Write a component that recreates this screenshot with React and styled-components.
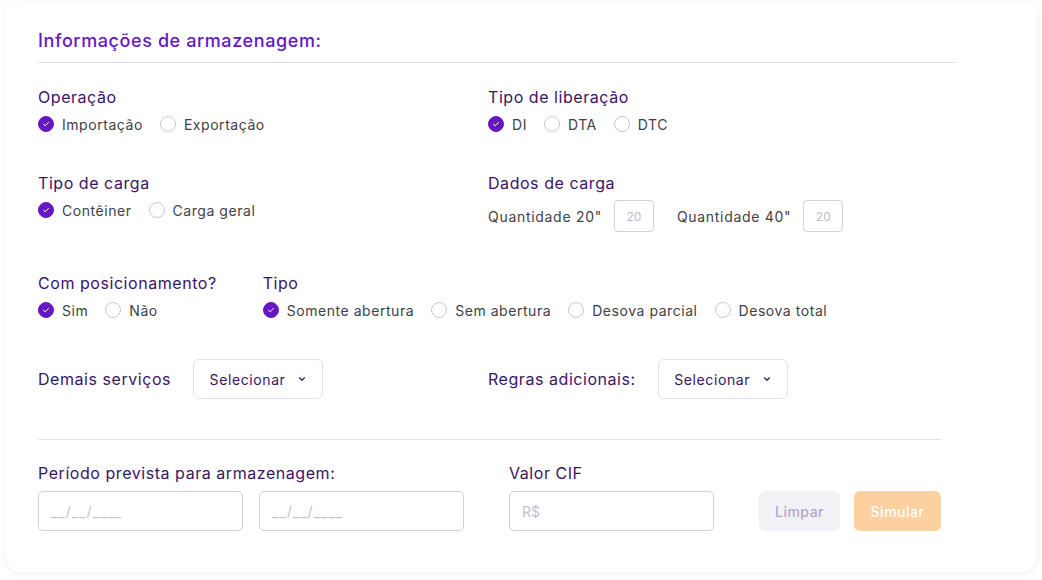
import React from 'react';
import styled, { createGlobalStyle } from 'styled-components';

const GlobalStyle = createGlobalStyle`
  body {
    margin: 0;
    background: #ffffff;
    font-family: 'Inter', 'Noto Sans', sans-serif;
  }
  * { box-sizing: border-box; }
`;

const Page = styled.div`
  padding: 1px 5px 8px 5px;
`;

const Card = styled.section`
  width: 1032px;
  height: 571px;
  background: #ffffff;
  border-radius: 16px;
  box-shadow: 0 1px 6px rgba(40, 30, 80, 0.08);
  padding: 27px 81px 0 33px;
`;

const Title = styled.h2`
  margin: 0;
  font-size: 18px;
  line-height: 26px;
  font-weight: 500;
  letter-spacing: 0.6px;
  color: #6517c4;
`;

const Divider = styled.hr`
  border: none;
  height: 1px;
  background: #e3dff0;
  margin: ${(p) => p.$mt}px 0 0 0;
  width: ${(p) => p.$w}px;
`;

const Grid = styled.div`
  display: grid;
  grid-template-columns: 450px 450px;
  margin-top: ${(p) => p.$mt}px;
`;

const Row = styled.div`
  display: flex;
  align-items: ${(p) => p.$align || 'flex-start'};
  gap: ${(p) => p.$gap || 0}px;
  margin-top: ${(p) => p.$mt || 0}px;
`;

const Group = styled.div`
  display: flex;
  flex-direction: column;
  gap: ${(p) => p.$gap || 5}px;
  width: ${(p) => (p.$w ? `${p.$w}px` : 'auto')};
`;

const Label = styled.div`
  font-size: 16px;
  line-height: 24px;
  letter-spacing: 0.55px;
  color: #3a1467;
  white-space: nowrap;
`;

const Options = styled.div`
  display: flex;
  align-items: center;
  gap: 17px;
  height: 20px;
`;

const Option = styled.label`
  display: flex;
  align-items: center;
  gap: 8px;
  font-size: 14px;
  letter-spacing: 0.55px;
  color: #414149;
  white-space: nowrap;
`;

const Circle = styled.span`
  width: 16px;
  height: 16px;
  border-radius: 50%;
  display: flex;
  align-items: center;
  justify-content: center;
  background: ${(p) => (p.$on ? '#6517c4' : '#ffffff')};
  border: 1px solid ${(p) => (p.$on ? '#6517c4' : '#c9c6d6')};
`;

const Radio = ({ on, children }) => (
  <Option>
    <Circle $on={on}>
      {on && (
        <svg width="8" height="8" viewBox="0 0 8 8">
          <path d="M1.5 4.2 L3.2 5.8 L6.5 2.4" fill="none" stroke="#fff" strokeWidth="1" strokeLinecap="round" strokeLinejoin="round" />
        </svg>
      )}
    </Circle>
    {children}
  </Option>
);

const QtyRow = styled.div`
  display: flex;
  align-items: center;
`;

const QtyText = styled.span`
  font-size: 14px;
  letter-spacing: 0.7px;
  color: #414149;
  white-space: nowrap;
  margin-right: 12px;
`;

const QtyBox = styled.div`
  width: 40px;
  height: 32px;
  border: 1px solid #d3d0de;
  border-radius: 4px;
  display: flex;
  align-items: center;
  justify-content: center;
  font-size: 12px;
  color: #bdbbc7;
  margin-right: 23px;
`;

const Select = styled.button`
  width: 130px;
  height: 40px;
  border: 1px solid #e4e1ee;
  border-radius: 6px;
  background: #fff;
  display: flex;
  align-items: center;
  justify-content: center;
  gap: 13px;
  font-family: inherit;
  font-size: 14px;
  letter-spacing: 0.6px;
  color: #3a1467;
  padding: 0;
`;

const Chevron = () => (
  <svg width="8" height="6" viewBox="0 0 8 6">
    <path d="M1.5 1.8 L4 4.2 L6.5 1.8" fill="none" stroke="#3a1467" strokeWidth="1.2" strokeLinecap="round" strokeLinejoin="round" />
  </svg>
);

const Field = styled.div`
  width: ${(p) => p.$w}px;
  height: 40px;
  border: 1px solid #d1cedc;
  border-radius: 5px;
  display: flex;
  align-items: center;
  padding-left: 12px;
  font-size: 14px;
  color: #c3c0cd;
  letter-spacing: ${(p) => p.$ls || 0}px;
`;

const Button = styled.button`
  height: 40px;
  width: ${(p) => p.$w}px;
  border: none;
  border-radius: 6px;
  background: ${(p) => p.$bg};
  color: ${(p) => p.$fg};
  font-family: inherit;
  font-size: 14px;
  font-weight: 500;
  letter-spacing: 0.5px;
`;

export default function App() {
  return (
    <Page>
      <GlobalStyle />
      <Card>
        <Title>Informações de armazenagem:</Title>
        <Divider $mt={8} $w={918} />

        <Grid $mt={22}>
          <Group>
            <Label>Operação</Label>
            <Options>
              <Radio on>Importação</Radio>
              <Radio>Exportação</Radio>
            </Options>
          </Group>
          <Group>
            <Label>Tipo de liberação</Label>
            <Options>
              <Radio on>DI</Radio>
              <Radio>DTA</Radio>
              <Radio>DTC</Radio>
            </Options>
          </Group>
        </Grid>

        <Grid $mt={37}>
          <Group>
            <Label>Tipo de carga</Label>
            <Options>
              <Radio on>Contêiner</Radio>
              <Radio>Carga geral</Radio>
            </Options>
          </Group>
          <Group>
            <Label>Dados de carga</Label>
            <QtyRow>
              <QtyText>Quantidade 20"</QtyText>
              <QtyBox>20</QtyBox>
              <QtyText>Quantidade 40"</QtyText>
              <QtyBox>20</QtyBox>
            </QtyRow>
          </Group>
        </Grid>

        <Row $mt={39} $gap={46}>
          <Group>
            <Label>Com posicionamento?</Label>
            <Options>
              <Radio on>Sim</Radio>
              <Radio>Não</Radio>
            </Options>
          </Group>
          <Group>
            <Label>Tipo</Label>
            <Options>
              <Radio on>Somente abertura</Radio>
              <Radio>Sem abertura</Radio>
              <Radio>Desova parcial</Radio>
              <Radio>Desova total</Radio>
            </Options>
          </Group>
        </Row>

        <Grid $mt={39}>
          <Row $align="center" $gap={22}>
            <Label>Demais serviços</Label>
            <Select>Selecionar <Chevron /></Select>
          </Row>
          <Row $align="center" $gap={22}>
            <Label>Regras adicionais:</Label>
            <Select>Selecionar <Chevron /></Select>
          </Row>
        </Grid>

        <Divider $mt={40} $w={903} />

        <Row $mt={21} $align="flex-end">
          <Group $gap={6} $w={471}>
            <Label>Período prevista para armazenagem:</Label>
            <Row $gap={16}>
              <Field $w={205} $ls={1}>__/__/____</Field>
              <Field $w={205} $ls={1}>__/__/____</Field>
            </Row>
          </Group>
          <Group $gap={6} $w={250}>
            <Label>Valor CIF</Label>
            <Field $w={205}>R$</Field>
          </Group>
          <Row $gap={14}>
            <Button $w={81} $bg="#f1f1f6" $fg="#b4a7c8">Limpar</Button>
            <Button $w={87} $bg="#fdd09f" $fg="#ffffff">Simular</Button>
          </Row>
        </Row>
      </Card>
    </Page>
  );
}
